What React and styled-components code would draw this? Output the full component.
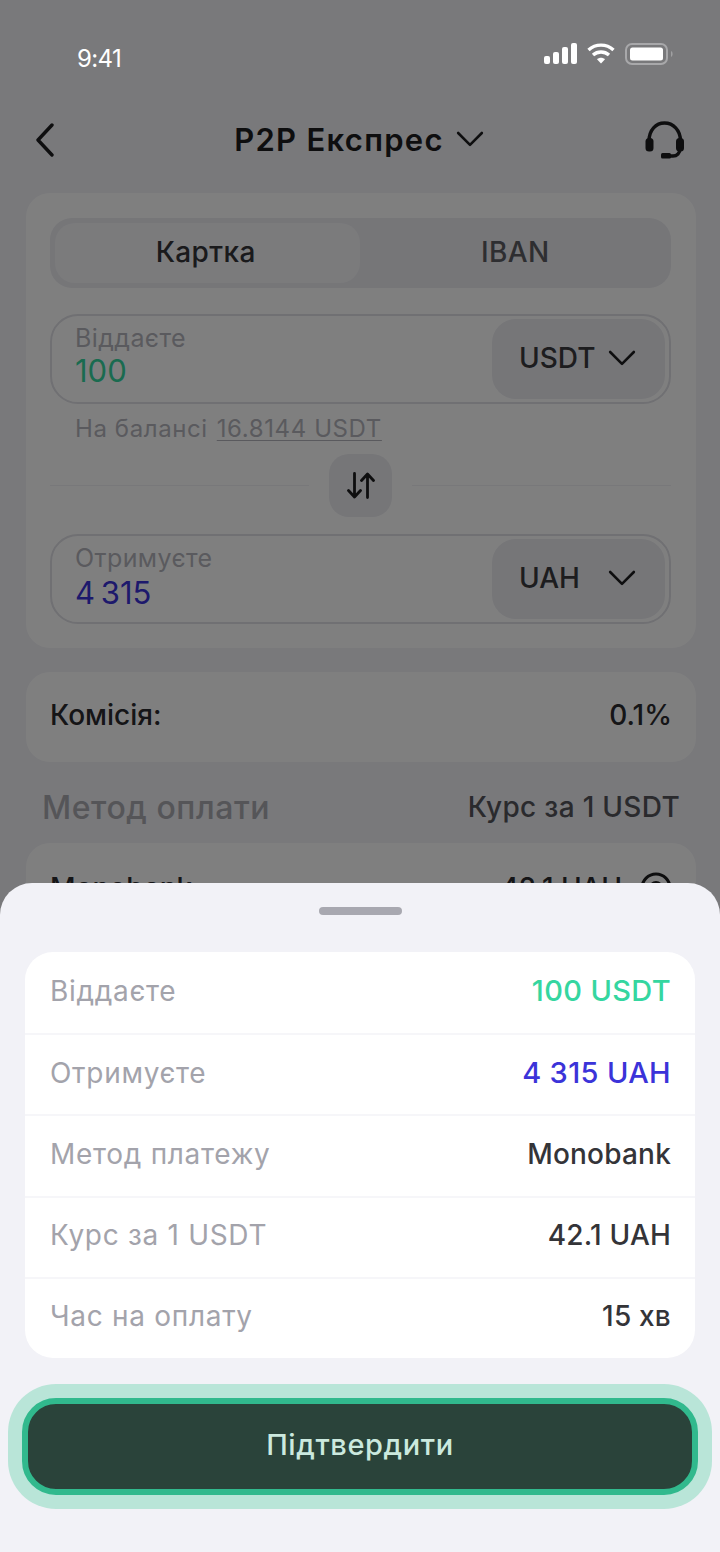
import React from 'react';
import styled, { createGlobalStyle } from 'styled-components';

const GlobalStyle = createGlobalStyle`
  html, body {
    margin: 0;
    padding: 0;
    background: #f2f2f7;
  }
  * {
    box-sizing: border-box;
  }
`;

const Screen = styled.div`
  position: relative;
  width: 720px;
  height: 1552px;
  overflow: hidden;
  background: #f2f2f7;
  font-family: Inter, 'Noto Sans', sans-serif;
  color: #1c1c1e;
`;

const Scrim = styled.div`
  position: absolute;
  inset: 0;
  z-index: 1;
  background: rgba(0, 0, 0, 0.5);
`;

const StatusBar = styled.div`
  position: relative;
  z-index: 2;
  height: 116px;
  display: flex;
  justify-content: space-between;
  padding: 44px 47px 0 77px;
  color: #fff;
`;

const Clock = styled.span`
  font-size: 24px;
  line-height: 30px;
  font-weight: 400;
  letter-spacing: -0.6px;
`;

const StatusIcons = styled.div`
  display: flex;
  align-items: flex-start;
  gap: 10px;
  margin-top: -1px;
`;

const Header = styled.header`
  height: 48px;
  display: flex;
  align-items: center;
  justify-content: space-between;
  padding: 0 35px 0 35px;
  margin-bottom: 29px;
`;

const Title = styled.div`
  display: flex;
  align-items: center;
  gap: 12px;
  font-size: 31px;
  font-weight: 600;
  letter-spacing: 1.3px;
  margin-left: 18px;
  padding-bottom: 2px;
`;

const Card = styled.section`
  margin: 0 24px 24px 26px;
  background: #fff;
  border-radius: 24px;
  padding: ${(p) => p.$padding || '25px 25px 24px 24px'};
`;

const Tabs = styled.div`
  display: flex;
  height: 70px;
  padding: 5px;
  background: #ececf1;
  border-radius: 22px;
  margin-bottom: 26px;
`;

const Tab = styled.div`
  flex: 1;
  display: flex;
  align-items: center;
  justify-content: center;
  border-radius: 20px;
  font-size: 28px;
  font-weight: 500;
  letter-spacing: 0.4px;
  padding: ${(p) => (p.$active ? '0 3px 2px 0' : '0 0 2px 5px')};
  background: ${(p) => (p.$active ? '#f6f6f9' : 'transparent')};
  color: ${(p) => (p.$active ? '#343438' : '#5c5c62')};
`;

const Field = styled.div`
  height: 90px;
  display: flex;
  justify-content: space-between;
  border: 2px solid #e0e0e6;
  border-radius: 28px;
  padding: 3px 4px 3px 3px;
`;

const FieldText = styled.div`
  display: flex;
  flex-direction: column;
  padding: 4px 0 0 20px;
`;

const FieldLabel = styled.span`
  font-size: 25px;
  line-height: 30px;
  letter-spacing: 0.4px;
  color: #b5b5bc;
`;

const FieldValue = styled.span`
  font-size: 31px;
  line-height: 35px;
  word-spacing: -3px;
  margin-top: ${(p) => p.$gap || 0}px;
  color: ${(p) => p.$color};
`;

const Selector = styled.div`
  width: 173px;
  display: flex;
  align-items: center;
  justify-content: space-between;
  padding: 0 29px 2px 27px;
  background: #ececf1;
  border-radius: 24px;
  font-size: 28px;
  font-weight: 500;
  color: #3a3a3e;
`;

const Balance = styled.div`
  padding-left: 25px;
  margin-top: 10px;
  font-size: 24px;
  line-height: 30px;
  letter-spacing: 0.6px;
  color: #b5b5bc;
`;

const BalanceAmount = styled.span`
  margin-left: 9px;
  text-decoration: underline;
  text-underline-offset: 3px;
  text-decoration-thickness: 1px;
`;

const SwapRow = styled.div`
  display: flex;
  align-items: center;
  gap: 20px;
  margin: 10px 0 17px;
`;

const Line = styled.div`
  flex: 1;
  height: 1px;
  background: #f1f1f5;
`;

const SwapButton = styled.div`
  width: 63px;
  height: 63px;
  display: flex;
  align-items: center;
  justify-content: center;
  background: #ececf1;
  border-radius: 20px;
`;

const InfoRow = styled.div`
  display: flex;
  align-items: center;
  justify-content: space-between;
  font-size: 28px;
  font-weight: 500;
  color: #2a2a2e;
`;

const MethodHead = styled.div`
  display: flex;
  align-items: center;
  justify-content: space-between;
  padding: 0 40px 0 42px;
  margin: -1px 0 14px;
  height: 44px;
`;

const MethodTitle = styled.span`
  font-size: 32px;
  font-weight: 500;
  letter-spacing: 0.55px;
  color: #aaaab1;
`;

const MethodRate = styled.span`
  font-size: 28px;
  font-weight: 500;
  letter-spacing: 0.3px;
  color: #55555b;
`;

const RateGroup = styled.div`
  display: flex;
  align-items: center;
  gap: 18px;
`;

const Sheet = styled.div`
  position: absolute;
  z-index: 3;
  left: 0;
  right: 0;
  bottom: 0;
  height: 669px;
  background: #f2f2f7;
  border-radius: 32px 32px 0 0;
  padding: 24px 25px 0 25px;
`;

const Handle = styled.div`
  width: 83px;
  height: 8px;
  margin: 0 auto 37px;
  background: #a8a8b0;
  border-radius: 4px;
`;

const Summary = styled.div`
  background: #fff;
  border-radius: 28px;
  margin-bottom: 40px;
`;

const SummaryRow = styled.div`
  height: 81.2px;
  display: flex;
  align-items: center;
  justify-content: space-between;
  padding: 0 24px 4px 25px;
  border-top: ${(p) => (p.$first ? 'none' : '2px solid #f6f6f9')};
`;

const SummaryLabel = styled.span`
  font-size: 28px;
  letter-spacing: 0.7px;
  color: #a3a3ab;
`;

const SummaryValue = styled.span`
  font-size: ${(p) => (p.$color ? 29 : 28)}px;
  font-weight: 500;
  letter-spacing: ${(p) => (p.$color ? 0.35 : 0.2)}px;
  color: ${(p) => p.$color || '#343438'};
`;

const ConfirmButton = styled.button`
  display: block;
  width: 676px;
  height: 97px;
  margin-left: -3px;
  padding: 0 0 3px;
  background: #2a433a;
  border: 6px solid #31b98d;
  border-radius: 34px;
  box-shadow: 0 0 0 14px #b9e5d8;
  font-family: inherit;
  font-size: 29px;
  font-weight: 500;
  letter-spacing: 0.6px;
  color: #cbe9de;
`;

const Chevron = ({ size = 28, width = 2.6, color = '#1c1c1e' }) => (
  <svg width={size} height={size * 0.6} viewBox="0 0 28 17" fill="none">
    <path d="M2 2l12 12L26 2" stroke={color} strokeWidth={width} strokeLinecap="round" strokeLinejoin="round" />
  </svg>
);

const SignalIcon = () => (
  <svg width="33" height="21" viewBox="0 0 33 21" fill="#fff">
    <rect x="0" y="13" width="6" height="8" rx="2" />
    <rect x="9" y="9" width="6" height="12" rx="2" />
    <rect x="18" y="4" width="6" height="17" rx="2" />
    <rect x="27" y="0" width="6" height="21" rx="2" />
  </svg>
);

const WifiIcon = () => (
  <svg width="28" height="21" viewBox="0 0 28 21" fill="none" stroke="#fff" strokeWidth="3.4">
    <path d="M1.5 7C8.6 .5 19.4 .5 26.5 7" />
    <path d="M6 12c4.6-4 11.4-4 16 0" />
    <path d="M10 16.2c2.4-2 5.6-2 8 0L14 20.5z" fill="#fff" stroke="none" />
  </svg>
);

const BatteryIcon = () => (
  <svg width="48" height="22" viewBox="0 0 48 22" fill="none">
    <rect x="1" y="1" width="41" height="20" rx="6" stroke="#a8a8aa" strokeWidth="2" />
    <rect x="5" y="4.5" width="33" height="13" rx="2.5" fill="#fff" />
    <path d="M46 8v6c1-.4 1.6-1.6 1.6-3S47 8.400 46 8z" fill="#a0a0a2" />
  </svg>
);

const BackIcon = () => (
  <svg width="20" height="34" viewBox="0 0 20 34" fill="none">
    <path d="M17 2L3 17l14 15" stroke="#1c1c1e" strokeWidth="3.4" strokeLinecap="round" strokeLinejoin="round" />
  </svg>
);

const HeadsetIcon = () => (
  <svg width="40" height="38" viewBox="0 0 40 38" fill="none" stroke="#1c1c1e" strokeWidth="3.4" strokeLinecap="round">
    <path d="M4 20C4 9 11 2 19.500 2S35.500 9 35.500 20" />
    <rect x="0.500" y="17" width="8" height="13.500" rx="3.500" fill="#1c1c1e" stroke="none" />
    <rect x="31" y="17" width="8" height="13.500" rx="3.500" fill="#1c1c1e" stroke="none" />
    <path d="M35 28c0 4-3 7-7 7h-4" />
    <rect x="16" y="32" width="10" height="5.500" rx="1.500" fill="#1c1c1e" stroke="none" />
  </svg>
);

const SwapIcon = () => (
  <svg width="28" height="27" viewBox="0 0 28 27" fill="none" stroke="#1c1c1e" strokeWidth="2.8" strokeLinejoin="round" strokeLinecap="round">
    <path d="M7.500 1.500v23M1.500 18.500l6 6.500 6-6.500" />
    <path d="M20.500 25.500v-23M14.500 8.500l6-6.500 6 6.500" />
  </svg>
);

const RadioIcon = () => (
  <svg width="32" height="32" viewBox="0 0 32 32" fill="none">
    <circle cx="16" cy="16" r="14" stroke="#1c1c1e" strokeWidth="3" />
    <circle cx="16" cy="16" r="7" fill="#1c1c1e" />
  </svg>
);

const summary = [
  { label: 'Віддаєте', value: '100 USDT', color: '#35d6a0' },
  { label: 'Отримуєте', value: '4 315 UAH', color: '#3b33d9' },
  { label: 'Метод платежу', value: 'Monobank' },
  { label: 'Курс за 1 USDT', value: '42.1 UAH' },
  { label: 'Час на оплату', value: '15 хв' },
];

const App = () => (
  <Screen>
    <GlobalStyle />
    <StatusBar>
      <Clock>9:41</Clock>
      <StatusIcons>
        <SignalIcon />
        <WifiIcon />
        <BatteryIcon />
      </StatusIcons>
    </StatusBar>
    <Header>
      <BackIcon />
      <Title>
        P2P Експрес
        <Chevron />
      </Title>
      <HeadsetIcon />
    </Header>

    <Card>
      <Tabs>
        <Tab $active>Картка</Tab>
        <Tab>IBAN</Tab>
      </Tabs>
      <Field>
        <FieldText>
          <FieldLabel>Віддаєте</FieldLabel>
          <FieldValue $color="#35d6a0">100</FieldValue>
        </FieldText>
        <Selector>
          USDT
          <Chevron />
        </Selector>
      </Field>
      <Balance>
        На балансі<BalanceAmount>16.8144 USDT</BalanceAmount>
      </Balance>
      <SwapRow>
        <Line />
        <SwapButton>
          <SwapIcon />
        </SwapButton>
        <Line />
      </SwapRow>
      <Field>
        <FieldText>
          <FieldLabel>Отримуєте</FieldLabel>
          <FieldValue $color="#3b33d9" $gap={2}>4 315</FieldValue>
        </FieldText>
        <Selector>
          UAH
          <Chevron />
        </Selector>
      </Field>
    </Card>

    <Card $padding="26px 24px 30px 24px">
      <InfoRow>
        <span>Комісія:</span>
        <span>0.1%</span>
      </InfoRow>
    </Card>

    <MethodHead>
      <MethodTitle>Метод оплати</MethodTitle>
      <MethodRate>Курс за 1 USDT</MethodRate>
    </MethodHead>

    <Card $padding="28px 24px 25px 24px">
      <InfoRow>
        <span>Monobank</span>
        <RateGroup>
          42.1 UAH
          <RadioIcon />
        </RateGroup>
      </InfoRow>
    </Card>

    <Scrim />

    <Sheet>
      <Handle />
      <Summary>
        {summary.map((row, i) => (
          <SummaryRow key={row.label} $first={i === 0}>
            <SummaryLabel>{row.label}</SummaryLabel>
            <SummaryValue $color={row.color}>{row.value}</SummaryValue>
          </SummaryRow>
        ))}
      </Summary>
      <ConfirmButton>Підтвердити</ConfirmButton>
    </Sheet>
  </Screen>
);

export default App;
